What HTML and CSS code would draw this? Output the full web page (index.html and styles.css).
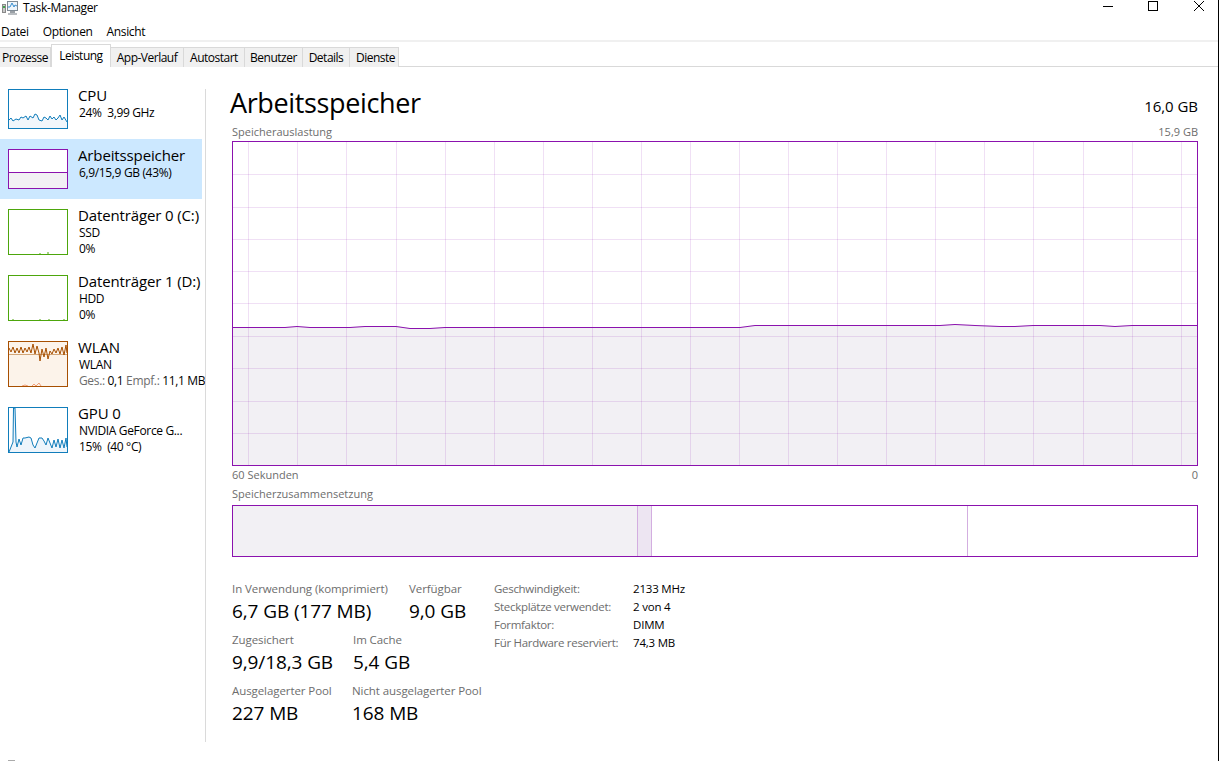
FILE: index.html
```html
<!DOCTYPE html>
<html lang="de">
<head>
<meta charset="utf-8">
<title>Task-Manager</title>
<link rel="stylesheet" href="styles.css">
</head>
<body>
<div class="window">
  <header class="titlebar">
    <svg class="app-icon" width="17" height="16" viewBox="0 0 17 16">
      <rect x="0.5" y="4.5" width="3" height="8" fill="#c9c9c9" stroke="#8a8a8a"/>
      <rect x="1" y="6" width="2" height="2" fill="#3fa34d"/>
      <rect x="5.5" y="1.5" width="10" height="9" fill="#eef5fb" stroke="#7f8a94"/>
      <path d="M6 7 L8 7 L10 3 L12 7 L13 5 L15 6" fill="none" stroke="#3a8fd0"/>
      <rect x="8" y="11" width="5" height="2" fill="#9aa0a6"/>
      <rect x="6" y="13" width="9" height="2" fill="#b9bdc1"/>
    </svg>
    <span class="app-title">Task-Manager</span>
    <div class="win-buttons">
      <svg class="win-btn" width="46" height="13" viewBox="0 0 46 13"><path d="M23 6.5H33" stroke="#000"/></svg>
      <svg class="win-btn" width="46" height="13" viewBox="0 0 46 13"><rect x="22.5" y="1.5" width="9" height="9" fill="none" stroke="#000"/></svg>
      <svg class="win-btn" width="46" height="13" viewBox="0 0 46 13"><path d="M22 1L32 11M32 1L22 11" stroke="#000" fill="none"/></svg>
    </div>
  </header>

  <nav class="menubar">
    <span class="menu-item">Datei</span>
    <span class="menu-item">Optionen</span>
    <span class="menu-item">Ansicht</span>
  </nav>

  <div class="tabs">
    <span class="tab t-prozesse">Prozesse</span>
    <span class="tab active t-leistung">Leistung</span>
    <span class="tab t-app">App-Verlauf</span>
    <span class="tab t-autostart">Autostart</span>
    <span class="tab t-benutzer">Benutzer</span>
    <span class="tab t-details">Details</span>
    <span class="tab t-dienste">Dienste</span>
  </div>

  <div class="content">
    <aside class="sidebar">
      <div class="item short first">
        <svg class="thumb" width="60" height="40" viewBox="0 0 60 40">
          <path d="M1 31L3 29L5 32L8 30L11 31L13 28L15 29L18 27L20 31L22 27L25 29L27 25L29 26L31 31L34 32L36 28L38 29L40 31L42 27L44 30L46 28L48 31L50 29L52 26L54 31L56 28L59 33V39H1Z" fill="#f1f6fb"/>
          <path d="M1 31L3 29L5 32L8 30L11 31L13 28L15 29L18 27L20 31L22 27L25 29L27 25L29 26L31 31L34 32L36 28L38 29L40 31L42 27L44 30L46 28L48 31L50 29L52 26L54 31L56 28L59 33" fill="none" stroke="#117dbb"/>
          <rect x="0.5" y="0.5" width="59" height="39" fill="none" stroke="#117dbb"/>
        </svg>
        <div class="item-text">
          <div class="item-name">CPU</div>
          <div class="item-sub">24%&nbsp; 3,99 GHz</div>
        </div>
      </div>

      <div class="item short selected">
        <svg class="thumb" width="60" height="40" viewBox="0 0 60 40">
          <rect x="0" y="0" width="60" height="40" fill="#fff"/>
          <rect x="1" y="23" width="58" height="16" fill="#f2f0f4"/>
          <path d="M0 23.5H60" stroke="#8b12ae"/>
          <rect x="0.5" y="0.5" width="59" height="39" fill="none" stroke="#8b12ae"/>
        </svg>
        <div class="item-text">
          <div class="item-name">Arbeitsspeicher</div>
          <div class="item-sub">6,9/15,9 GB (43%)</div>
        </div>
      </div>

      <div class="item">
        <svg class="thumb" width="60" height="46" viewBox="0 0 60 46">
          <path d="M32 45V44M40 45V43" stroke="#4da60c"/>
          <rect x="0.5" y="0.5" width="59" height="45" fill="none" stroke="#4da60c"/>
        </svg>
        <div class="item-text">
          <div class="item-name">Datenträger 0 (C:)</div>
          <div class="item-sub">SSD</div>
          <div class="item-sub">0%</div>
        </div>
      </div>

      <div class="item">
        <svg class="thumb" width="60" height="46" viewBox="0 0 60 46">
          <path d="M5 45V44M32 45V44M41 45V44M56 45V44" stroke="#4da60c"/>
          <rect x="0.5" y="0.5" width="59" height="45" fill="none" stroke="#4da60c"/>
        </svg>
        <div class="item-text">
          <div class="item-name">Datenträger 1 (D:)</div>
          <div class="item-sub">HDD</div>
          <div class="item-sub">0%</div>
        </div>
      </div>

      <div class="item">
        <svg class="thumb" width="60" height="46" viewBox="0 0 60 46">
          <rect x="0" y="0" width="60" height="46" fill="#fcf3ea"/>
          <path d="M0 13.5H60" stroke="#d2a679"/>
          <path d="M1 7L3 11L5 6L7 12L9 7L11 12L13 6L15 12L17 7L19 11L21 6L23 12L25 3L27 13L29 5L31 12L32 20L34 8L36 16L38 7L40 18L42 10L44 13L46 8L48 12L50 7L52 13L54 6L56 14L58 4L59 12" fill="none" stroke="#a74f01"/>
          <path d="M14 45L17 44L20 45M24 45L26 43L28 45L31 42L33 45" fill="none" stroke="#f0a07a"/>
          <rect x="0.5" y="0.5" width="59" height="45" fill="none" stroke="#a74f01"/>
        </svg>
        <div class="item-text">
          <div class="item-name">WLAN</div>
          <div class="item-sub">WLAN</div>
          <div class="item-sub nowrap"><span class="muted">Ges.:</span> 0,1 <span class="muted">Empf.:</span> 11,1 MB</div>
        </div>
      </div>

      <div class="item">
        <svg class="thumb" width="60" height="46" viewBox="0 0 60 46">
          <path d="M1 45L3 40L5 35L5.5 1L7 1L8 35L9 40L11 32L13 38L15 31L17 31L21 30L23 31L25 38L27 41L29 36L31 31L34 31L36 34L38 38L40 31L42 36L44 41L46 33L48 40L50 32L52 41L54 33L56 41L58 31L59 40V45Z" fill="#eef5fb"/>
          <path d="M1 45L3 40L5 35L5.5 1L7 1L8 35L9 40L11 32L13 38L15 31L17 31L21 30L23 31L25 38L27 41L29 36L31 31L34 31L36 34L38 38L40 31L42 36L44 41L46 33L48 40L50 32L52 41L54 33L56 41L58 31L59 40" fill="none" stroke="#117dbb"/>
          <rect x="0.5" y="0.5" width="59" height="45" fill="none" stroke="#117dbb"/>
        </svg>
        <div class="item-text">
          <div class="item-name">GPU 0</div>
          <div class="item-sub">NVIDIA GeForce G...</div>
          <div class="item-sub">15%&nbsp; (40 °C)</div>
        </div>
      </div>
    </aside>

    <main class="main">
      <div class="head">
        <h1 class="heading">Arbeitsspeicher</h1>
        <span class="capacity">16,0 GB</span>
      </div>
      <div class="caption-row">
        <span>Speicherauslastung</span>
        <span>15,9 GB</span>
      </div>
      <svg class="chart" width="966" height="325" viewBox="232 141 966 325">
        <path d="M232 327L285 327L297 326L310 327L350 327L365 326L396 326L410 328L430 328L445 327L740 327L755 325L940 325L955 324L975 325L1000 326L1015 326L1033 325L1100 325L1115 326L1132 325L1198 325V466H232Z" fill="#f2f0f4"/>
        <path d="M248.5 141V466M297.5 141V466M346.5 141V466M396.5 141V466M445.5 141V466M494.5 141V466M543.5 141V466M592.5 141V466M641.5 141V466M690.5 141V466M739.5 141V466M788.5 141V466M837.5 141V466M886.5 141V466M935.5 141V466M984.5 141V466M1033.5 141V466M1083.5 141V466M1132.5 141V466M1181.5 141V466M232 174.5H1198M232 207.5H1198M232 239.5H1198M232 271.5H1198M232 303.5H1198M232 336.5H1198M232 368.5H1198M232 401.5H1198M232 433.5H1198" fill="none" stroke="#8b12ae" stroke-opacity="0.13"/>
        <path d="M232 327.5L285 327.5L297 326.5L310 327.5L350 327.5L365 326.5L396 326.5L410 328.5L430 328.5L445 327.5L740 327.5L755 325.5L940 325.5L955 324.5L975 325.5L1000 326.5L1015 326.5L1033 325.5L1100 325.5L1115 326.5L1132 325.5L1198 325.5" fill="none" stroke="#8b12ae"/>
        <rect x="232.5" y="141.5" width="965" height="324" fill="none" stroke="#8b12ae"/>
      </svg>
      <div class="caption-row axis">
        <span>60 Sekunden</span>
        <span>0</span>
      </div>
      <div class="caption-row composition-label">
        <span>Speicherzusammensetzung</span>
      </div>
      <div class="composition">
        <div class="seg seg-used"></div>
        <div class="seg seg-modified"></div>
        <div class="seg seg-standby"></div>
        <div class="seg seg-free"></div>
      </div>

      <div class="stats">
        <div class="stats-left">
          <div class="stat-row">
            <div class="stat w177"><div class="stat-label">In Verwendung (komprimiert)</div><div class="stat-value">6,7 GB (177 MB)</div></div>
            <div class="stat"><div class="stat-label">Verfügbar</div><div class="stat-value">9,0 GB</div></div>
          </div>
          <div class="stat-row">
            <div class="stat w121"><div class="stat-label">Zugesichert</div><div class="stat-value">9,9/18,3 GB</div></div>
            <div class="stat"><div class="stat-label">Im Cache</div><div class="stat-value">5,4 GB</div></div>
          </div>
          <div class="stat-row">
            <div class="stat w120"><div class="stat-label">Ausgelagerter Pool</div><div class="stat-value">227 MB</div></div>
            <div class="stat"><div class="stat-label">Nicht ausgelagerter Pool</div><div class="stat-value">168 MB</div></div>
          </div>
        </div>
        <dl class="specs">
          <dt>Geschwindigkeit:</dt><dd>2133 MHz</dd>
          <dt>Steckplätze verwendet:</dt><dd>2 von 4</dd>
          <dt>Formfaktor:</dt><dd>DIMM</dd>
          <dt>Für Hardware reserviert:</dt><dd>74,3 MB</dd>
        </dl>
      </div>
    </main>
  </div>
  <div class="corner-mark"></div>
</div>
</body>
</html>
```
FILE: styles.css
```css
* { box-sizing: border-box; }
html, body { margin: 0; padding: 0; }
body {
  background: #fff;
  color: #000;
  font-family: "Open Sans", "Noto Sans", sans-serif;
  font-size: 12px;
  letter-spacing: -0.35px;
}
.window {
  position: relative;
  width: 1219px;
  height: 761px;
  border-right: 1px solid #000;
  overflow: hidden;
}
.corner-mark {
  position: absolute;
  left: 8px;
  top: 760px;
  width: 7px;
  height: 1px;
  background: #aaa;
}
.titlebar {
  height: 22px;
  display: flex;
  align-items: flex-start;
  padding: 0 0 0 2px;
}
.app-icon { margin-right: 4px; }
.app-title { line-height: 15px; }
.win-buttons { margin-left: auto; display: flex; }
.win-btn { display: block; }
.menubar {
  height: 20px;
  display: flex;
  gap: 14px;
  padding: 0 0 0 1px;
  line-height: 20px;
  border-bottom: 2px solid #f0f0f0;
}
.tabs {
  height: 25px;
  display: flex;
  align-items: flex-end;
  border-bottom: 1px solid #d9d9d9;
}
.tab {
  height: 20px;
  line-height: 19px;
  background: #f0f0f0;
  border: 1px solid #d9d9d9;
  border-bottom: 0;
  border-left: 0;
  text-align: center;
  margin-bottom: -1px;
  white-space: nowrap;
  letter-spacing: -0.5px;
}
.tab.active {
  height: 23px;
  line-height: 21px;
  background: #fff;
  border-left: 1px solid #d9d9d9;
  position: relative;
  z-index: 1;
}
.t-prozesse { width: 51px; }
.t-leistung { width: 60px; }
.t-app { width: 73px; }
.t-autostart { width: 61px; }
.t-benutzer { width: 58px; }
.t-details { width: 47px; }
.t-dienste { width: 49px; padding-left: 3px; }

.content { display: flex; height: 694px; }
.sidebar {
  width: 206px;
  height: 653px;
  margin-top: 22px;
  border-right: 1px solid #dadada;
  flex: none;
}
.item {
  width: 205px;
  height: 66px;
  display: flex;
  padding: 10px 0 10px 8px;
  overflow: hidden;
}
.item.short { height: 60px; }
.item.first { height: 50px; padding-top: 0; overflow: visible; }
.item.selected { background: linear-gradient(to right, #cce8ff 202px, #fff 202px); }
.thumb { display: block; flex: none; }
.item-text { margin-left: 10px; white-space: nowrap; }
.item-name { font-size: 15px; line-height: 17px; margin-top: -2px; letter-spacing: -0.13px; }
.item-sub { line-height: 16px; margin-left: 1px; }
.item .item-name + .item-sub { margin-top: 1px; }
.muted { color: #6d6d6d; }

.main { flex: 1; padding: 0 20px 0 24px; min-width: 0; }
.head {
  display: flex;
  justify-content: space-between;
  align-items: flex-end;
  height: 55px;
}
.heading {
  margin: 0 0 2px 0;
  font-size: 27px;
  font-weight: 400;
  line-height: 34px;
  letter-spacing: -0.37px;
}
.capacity { font-size: 15px; line-height: 20px; margin-bottom: 6px; letter-spacing: -0.05px; }
.caption-row {
  margin-left: 2px;
  display: flex;
  justify-content: space-between;
  color: #6d6d6d;
  font-size: 11px;
  line-height: 14px;
  height: 14px;
  letter-spacing: 0;
  margin-top: 3px;
}
.caption-row + .chart { margin-top: 2px; }
.chart { display: block; margin-left: 2px; }
.axis { margin-top: 2px; }
.composition-label { margin-top: 5px; }
.composition {
  margin: 4px 0 0 2px;
  width: 966px;
  height: 52px;
  border: 1px solid #8b12ae;
  display: flex;
}
.seg { height: 100%; }
.seg-used { width: 405px; background: #f2f0f4; border-right: 1px solid #d3aee0; }
.seg-modified { width: 14px; background: #ede5f2; border-right: 1px solid #d3aee0; }
.seg-standby { width: 316px; background: #fff; border-right: 1px solid #d3aee0; }
.seg-free { flex: 1; }

.stats { display: flex; margin: 25px 0 0 2px; }
.stats-left { width: 262px; flex: none; }
.stat-row { display: flex; height: 51px; }
.stat { white-space: nowrap; }
.w177 { width: 177px; }
.w121 { width: 121px; }
.w120 { width: 120px; }
.stat-label { color: #6d6d6d; font-size: 11.5px; line-height: 14px; letter-spacing: -0.08px; }
.stat-value { font-size: 19px; line-height: 24px; margin-top: 3px; letter-spacing: -0.1px; }
.specs {
  margin: 0;
  display: grid;
  grid-template-columns: 139px auto;
  grid-auto-rows: 18px;
  line-height: 14px;
  align-content: start;
  font-size: 11.5px;
  letter-spacing: -0.2px;
}
.specs dt { color: #6d6d6d; letter-spacing: -0.3px; }
.specs dd { margin: 0; }
.nowrap { white-space: nowrap; }
```
